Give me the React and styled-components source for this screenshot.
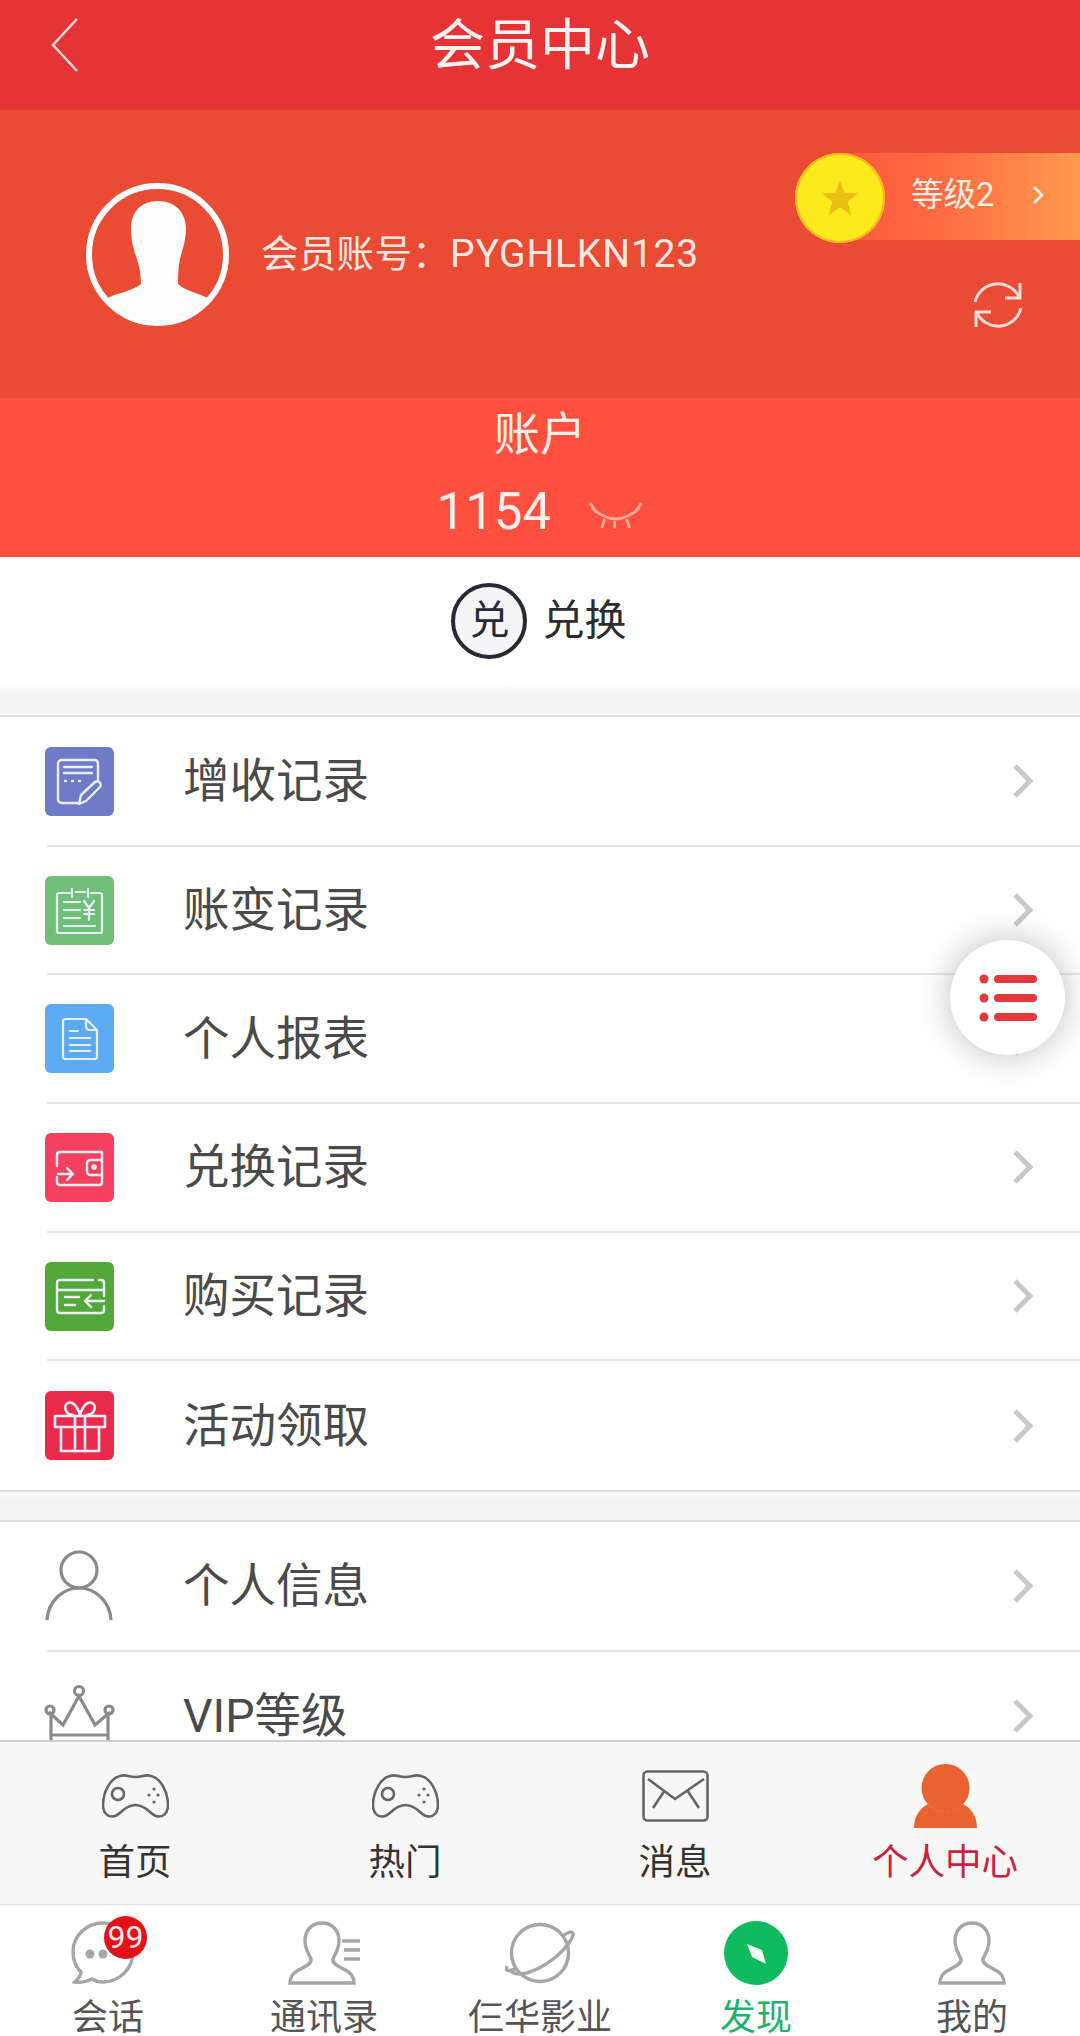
import React from "react";
import styled, { createGlobalStyle } from "styled-components";

const Global = createGlobalStyle`
  html, body { margin: 0; padding: 0; background: #fff; }
  * { box-sizing: border-box; }
  body { font-family: Roboto, "Noto Sans CJK SC", sans-serif; }
`;

const Page = styled.div`
  position: relative;
  width: 1080px;
  height: 2036px;
  overflow: hidden;
  display: flex;
  flex-direction: column;
  background: #fff;
`;

const Header = styled.header`
  flex: 0 0 110px;
  background: #e53336;
  display: grid;
  grid-template-columns: 1fr auto 1fr;
  align-items: start;
  padding-left: 50px;
`;
const BackIcon = styled.svg`
  width: 30px;
  height: 56px;
  margin-top: 17px;
  fill: none;
  stroke: #fbd9d6;
  stroke-width: 2.5;
`;
const Title = styled.h1`
  margin: 12px 0 0;
  font-size: 55px;
  line-height: 66px;
  font-weight: 400;
  color: #fdf3f0;
  transform: translateX(-25px);
`;

const Profile = styled.section`
  flex: 0 0 288px;
  background: #e94b33;
  display: flex;
  align-items: center;
  padding-left: 86px;
`;
const Avatar = styled.svg`
  flex: 0 0 143px;
  width: 143px;
  height: 143px;
`;
const Account = styled.div`
  margin-left: 32px;
  font-size: 37.5px;
  line-height: 44px;
  color: #fbe7e1;
  white-space: nowrap;
  letter-spacing: 0.3px;
`;
const AccountId = styled.span`
  font-size: 39px;
  letter-spacing: 0.8px;
`;
const ProfileSide = styled.div`
  margin-left: auto;
  align-self: flex-start;
  width: 285px;
  padding-top: 43px;
  display: flex;
  flex-direction: column;
`;
const RankBadge = styled.div`
  position: relative;
  height: 87px;
  margin-left: 45px;
  display: flex;
  align-items: center;
  background: linear-gradient(90deg, #fb5a3e 0%, #ff6a42 40%, #ff9a4d 100%);
  color: #fdeee2;
`;
const Coin = styled.div`
  position: absolute;
  left: -45px;
  top: 0;
  width: 90px;
  height: 90px;
  border-radius: 50%;
  background: #fdea1c;
  box-shadow: inset 0 0 0 2px #f5b81d;
  display: flex;
  align-items: center;
  justify-content: center;
`;
const RankText = styled.span`
  margin-left: 71px;
  font-size: 32.5px;
  line-height: 40px;
  margin-top: -3px;
`;
const RankChevron = styled.svg`
  width: 12px;
  height: 20px;
  margin-left: 38px;
  margin-top: -4px;
  fill: none;
  stroke: #fdf2e8;
  stroke-width: 2.6;
`;
const RefreshIcon = styled.svg`
  width: 52px;
  height: 52px;
  margin: 39px 0 0 177px;
  fill: none;
  stroke: #fbdcd6;
  stroke-width: 3;
`;

const Balance = styled.section`
  flex: 0 0 159px;
  background: #ff4f3f;
  display: flex;
  flex-direction: column;
  align-items: center;
  color: #fdeeea;
`;
const BalanceLabel = styled.div`
  font-size: 46px;
  line-height: 54px;
  margin-top: 9px;
`;
const BalanceRow = styled.div`
  display: flex;
  align-items: center;
  margin-top: 21px;
  width: 207px;
`;
const BalanceValue = styled.span`
  font-size: 51px;
  line-height: 60px;
`;
const EyeIcon = styled.svg`
  width: 56px;
  height: 28px;
  margin-left: 37px;
  margin-top: 8px;
  fill: none;
  stroke: #ffa99a;
  stroke-width: 2.8;
`;

const Exchange = styled.section`
  flex: 0 0 130px;
  background: #fff;
  display: flex;
  align-items: center;
  justify-content: center;
  gap: 15px;
  padding-right: 2px;
  padding-bottom: 2px;
`;
const ExchangeBadge = styled.div`
  width: 76px;
  height: 76px;
  border-radius: 50%;
  border: 4px solid #262a36;
  background: #f5f5f7;
  color: #262a36;
  font-size: 40px;
  line-height: 1;
  display: flex;
  align-items: center;
  justify-content: center;
`;
const ExchangeText = styled.span`
  font-size: 42px;
  line-height: 52px;
  color: #2c2c2c;
`;

const SectionGap = styled.div`
  flex: 0 0 ${(p) => p.$h}px;
  height: ${(p) => p.$h}px;
  background: linear-gradient(180deg, #fbfbfb 0%, #f3f3f3 40%, #f5f5f5 100%);
  border-top: ${(p) => (p.$ruled ? "2px solid #dedede" : "none")};
  border-bottom: 2px solid #dedede;
`;

const Scroller = styled.div`
  flex: 1 1 0;
  min-height: 0;
  overflow: hidden;
  background: #fff;
`;
const List = styled.div`
  background: #fff;
  padding: 1px 0 0 47px;
`;
const Row = styled.div`
  height: 128.7px;
  display: flex;
  align-items: center;
  border-bottom: 2px solid #e6e6e6;
  &:last-child { border-bottom: none; }
`;
const Tile = styled.div`
  flex: 0 0 69px;
  width: 69px;
  height: 69px;
  margin-left: -2px;
  border-radius: 6px;
  background: ${(p) => p.$bg};
  display: flex;
`;
const TileSvg = styled.svg`
  width: 69px;
  height: 69px;
  fill: none;
  stroke: #e9eef8;
  stroke-width: ${(p) => p.$sw || 2.4};
  stroke-linecap: round;
  stroke-linejoin: round;
`;
const LineIconBox = styled.svg`
  flex: 0 0 69px;
  width: 69px;
  height: ${(p) => p.$h || 69}px;
  margin-left: -2px;
  overflow: visible;
  fill: none;
  stroke: #8a8a8a;
  stroke-width: 3.2;
`;
const RowLabel = styled.span`
  margin-left: 69px;
  font-size: 46.5px;
  line-height: 46px;
  color: #4a4a4a;
  white-space: nowrap;
`;
const RowChevron = styled.svg`
  margin-left: auto;
  margin-right: 46px;
  width: 22px;
  height: 36px;
  fill: none;
  stroke: #c9c9c9;
  stroke-width: 5;
`;

const FloatButton = styled.div`
  position: absolute;
  left: 950px;
  top: 940px;
  width: 115px;
  height: 115px;
  border-radius: 50%;
  background: #fff;
  box-shadow: 0 0 34px rgba(0, 0, 0, 0.26);
  display: flex;
  align-items: center;
  justify-content: center;
`;
const FloatIcon = styled.svg`
  width: 58px;
  height: 48px;
  fill: #e03a3e;
`;

const Tabs = styled.nav`
  flex: 0 0 165px;
  background: #f7f7f7;
  border-top: 2px solid #cfcfcf;
  border-bottom: 1px solid #dddddd;
  display: grid;
  grid-template-columns: repeat(4, 1fr);
`;
const Tab = styled.div`
  display: flex;
  flex-direction: column;
  align-items: center;
  color: ${(p) => (p.$active ? "#c8243f" : "#333")};
`;
const TabIconBox = styled.div`
  height: 66px;
  margin-top: 21px;
  display: flex;
  align-items: center;
  justify-content: center;
`;
const TabIcon = styled.svg`
  width: ${(p) => p.$w}px;
  height: ${(p) => p.$h}px;
  fill: none;
  stroke: #666;
  stroke-width: 2.6;
`;
const TabLabel = styled.span`
  margin-top: 12px;
  font-size: 36.5px;
  line-height: 44px;
  white-space: nowrap;
`;

const BottomNav = styled.nav`
  flex: 0 0 131px;
  background: #fff;
  display: grid;
  grid-template-columns: repeat(5, 1fr);
  overflow: hidden;
`;
const NavItem = styled.div`
  display: flex;
  flex-direction: column;
  align-items: center;
  color: ${(p) => (p.$active ? "#23b26d" : "#555")};
`;
const NavIconBox = styled.div`
  position: relative;
  height: 64px;
  margin-top: 16px;
  margin-right: ${(p) => p.$pull || 0}px;
  display: flex;
  align-items: center;
  justify-content: center;
`;
const NavIcon = styled.svg`
  width: ${(p) => p.$w}px;
  height: 64px;
  fill: none;
  stroke: #a6a6a6;
  stroke-width: 3.4;
`;
const NavLabel = styled.span`
  margin-top: 15px;
  font-size: 36px;
  line-height: 36px;
  white-space: nowrap;
`;
const CountBadge = styled.span`
  position: absolute;
  left: 33px;
  top: -5px;
  width: 43px;
  height: 43px;
  border-radius: 50%;
  background: #e60f1a;
  color: #fbe9e9;
  font-size: 32px;
  line-height: 43px;
  text-align: center;
`;

const Chevron = () => (
  <RowChevron viewBox="0 0 22 36"><path d="M3 3 L18 18 L3 33" /></RowChevron>
);

const NoteIcon = () => (
  <TileSvg viewBox="0 0 69 69">
    <path d="M33 56 H17 Q13 56 13 52 V17 Q13 13 17 13 H49 Q53 13 53 17 V32" />
    <path d="M19 20 H47 M19 26 H47" />
    <path d="M20 34 H21 M27 34 H28 M34 34 H35" />
    <path d="M36 48 L50 35 Q53 33 55 36 Q57 38 54 41 L41 54 L34 57 Z" />
  </TileSvg>
);
const LedgerIcon = () => (
  <TileSvg viewBox="0 0 69 69" $sw={2.2}>
    <path d="M25 17 H14 Q12 17 12 19 V55 Q12 57 14 57 H55 Q57 57 57 55 V19 Q57 17 55 17 H46 M31 16 H40" />
    <path d="M27 13 V21 M43 13 V21" />
    <path d="M19 26 H35 M19 34 H35 M19 42 H35 M19 50 H50" />
    <path d="M39 25 L44 32 L49 25 M44 32 V44 M39 34 H49 M39 38 H49" />
  </TileSvg>
);
const DocIcon = () => (
  <TileSvg viewBox="0 0 69 69" $sw={2.2}>
    <path d="M21 15 H41 L52 26 V53 Q52 55 50 55 H20 Q18 55 18 53 V17 Q18 15 21 15 Z" />
    <path d="M41 15 V22 Q41 26 45 26 H52" />
    <path d="M25 27 H33 M25 34 H45 M25 41 H45 M25 47 H45" />
  </TileSvg>
);
const WalletIcon = () => (
  <TileSvg viewBox="0 0 69 69">
    <path d="M56 19 H15 Q12 19 12 22 V33 M12 44 V49 Q12 52 15 52 H54 Q57 52 57 49 V42" />
    <path d="M57 27 H46 Q42 27 42 31 V38 Q42 42 46 42 H57 V19" />
    <circle cx="49" cy="34" r="1.6" />
    <path d="M13 41 H28 M22 35 L28 41 L22 47" />
  </TileSvg>
);
const CardIcon = () => (
  <TileSvg viewBox="0 0 69 69">
    <path d="M48 18 H15 Q12 18 12 21 V48 Q12 51 15 51 H56 Q59 51 59 48 V44 M59 34 V21 Q59 18 56 18 H54" />
    <path d="M12 28 H59" />
    <path d="M20 35 H34 M20 43 H30" />
    <path d="M59 39 H40 M46 33 L40 39 L46 45" />
  </TileSvg>
);
const GiftIcon = () => (
  <TileSvg viewBox="0 0 69 69" $sw={2.6}>
    <path d="M10 25 H60 V36 H10 Z" />
    <path d="M16 36 V60 H54 V36" />
    <path d="M30 25 V60 M40 25 V60" />
    <path d="M35 24 C32 14 27 10 23 12 C18 14 20 24 28 24 M35 24 C38 14 43 10 47 12 C52 14 50 24 42 24" />
  </TileSvg>
);
const PersonLine = () => (
  <LineIconBox viewBox="0 0 69 69">
    <circle cx="34" cy="18" r="18" />
    <path d="M2 68 C3 50 17 36 34 36 C51 36 65 50 66 68" />
  </LineIconBox>
);
const Crown = () => (
  <LineIconBox viewBox="0 0 69 60" $h={60}>
    <circle cx="34" cy="5" r="4.5" />
    <circle cx="5" cy="24" r="4" />
    <circle cx="64" cy="24" r="4" />
    <path d="M34 10 L18 39 L6 28 V60 H63 V28 L50 39 Z" />
    <path d="M6 49 H63" />
  </LineIconBox>
);
const Gamepad = () => (
  <TabIcon viewBox="0 0 67 44" $w={67} $h={44}>
    <path d="M18 2 C24 0 26 3 33.5 3 C41 3 43 0 49 2 C58 4 66 17 66 31 C66 40 60 44 54 42 C48 40 44 31 33.5 31 C23 31 19 40 13 42 C7 44 1 40 1 31 C1 17 9 4 18 2 Z" />
    <circle cx="16" cy="20" r="6" />
    <g fill="#666" stroke="none">
      <circle cx="52" cy="15" r="1.6" /><circle cx="47" cy="21" r="1.6" /><circle cx="56" cy="21" r="1.6" /><circle cx="52" cy="28" r="1.6" />
    </g>
  </TabIcon>
);
const Envelope = () => (
  <TabIcon viewBox="0 0 67 52" $w={67} $h={52}>
    <rect x="1.5" y="1.5" width="64" height="49" rx="4" />
    <path d="M6 9 L33 29 L62 9 M11 38 L23 20 M57 38 L45 20" />
  </TabIcon>
);
const PersonFilled = () => (
  <TabIcon viewBox="0 0 63 64" $w={63} $h={64}>
    <g fill="#e8632f" stroke="none">
      <circle cx="31.5" cy="24" r="24" />
      <path d="M0 64 C0 52 6 44 14 40 C22 50 41 50 49 40 C57 44 63 52 63 64 Z" />
    </g>
  </TabIcon>
);
const Chat = () => (
  <NavIcon viewBox="0 0 64 64" $w={64}>
    <path d="M32 2 C15 2 2 15 2 31 C2 39 5 46 10 51 C10 55 7 58 4 61 C10 62 17 60 21 58 C24 60 28 61 32 61 C48 61 62 48 62 31 C62 15 48 2 32 2 Z" />
    <g fill="#a6a6a6" stroke="none"><circle cx="19" cy="33" r="4.5" /><circle cx="32" cy="33" r="4.5" /></g>
  </NavIcon>
);
const silhouette = "M34 2 C23 2 17 10 17 20 C17 28 21 33 23 38 C24 44 15 46 9 50 C4 53 2 57 2 62 L66 62 C66 57 64 53 59 50 C53 46 44 44 45 38 C47 33 51 28 51 20 C51 10 45 2 34 2 Z";
const Contact = () => (
  <NavIcon viewBox="0 0 72 64" $w={72}>
    <path d={silhouette} />
    <path d="M54 20 H72 M56 29 H72 M56 38 H72" />
  </NavIcon>
);
const Planet = () => (
  <NavIcon viewBox="0 0 70 64" $w={70}>
    <circle cx="35" cy="32" r="28.5" />
    <path d="M12 47 C3 51 -1 50 2 45 M58 15 C64 10 69 10 68 14 C66 22 52 38 34 47 C24 52 12 56 6 50" />
  </NavIcon>
);
const Compass = () => (
  <NavIcon viewBox="0 0 64 64" $w={64}>
    <circle cx="32" cy="32" r="32" fill="#10bb5e" stroke="none" />
    <path d="M23 23 L38 29 L42 43 L28 36 Z" fill="#f1fbf5" stroke="none" />
  </NavIcon>
);
const Me = () => (
  <NavIcon viewBox="0 0 68 64" $w={68}><path d={silhouette} /></NavIcon>
);

const records = [
  ["增收记录", "#6f7bc9", <NoteIcon />],
  ["账变记录", "#6fbf78", <LedgerIcon />],
  ["个人报表", "#5cabf2", <DocIcon />],
  ["兑换记录", "#f5405f", <WalletIcon />],
  ["购买记录", "#52a838", <CardIcon />],
  ["活动领取", "#ea2a4a", <GiftIcon />],
];

export default function App() {
  return (
    <Page>
      <Global />
      <Header>
        <BackIcon viewBox="0 0 30 56"><path d="M27 2 L3 28 L27 54" /></BackIcon>
        <Title>会员中心</Title>
      </Header>

      <Profile>
        <Avatar viewBox="0 0 143 143">
          <defs><clipPath id="av"><circle cx="71.5" cy="71.5" r="69" /></clipPath></defs>
          <circle cx="71.5" cy="71.5" r="68.5" fill="none" stroke="#fff" strokeWidth="6" />
          <path clipPath="url(#av)" fill="#fbfbfb" d="M72 18 C90 18 100 30 100 46 C100 58 96 68 94 76 C92 86 92 94 92 101 C100 108 112 110 124 116 L124 143 L19 143 L19 116 C31 110 46 108 55 101 C55 94 54 86 51 76 C48 68 45 58 45 46 C45 30 54 18 72 18 Z" />
        </Avatar>
        <Account>会员账号：<AccountId>PYGHLKN123</AccountId></Account>
        <ProfileSide>
          <RankBadge>
            <Coin>
              <svg width="36" height="34" viewBox="0 0 38 36"><path fill="#e8bf12" d="M19 0 L24 13 L38 13 L27 22 L31 36 L19 28 L7 36 L11 22 L0 13 L14 13 Z" /></svg>
            </Coin>
            <RankText>等级2</RankText>
            <RankChevron viewBox="0 0 12 20"><path d="M2 2 L10 10 L2 18" /></RankChevron>
          </RankBadge>
          <RefreshIcon viewBox="0 0 52 52">
            <path d="M3 23 A23.5 23.5 0 0 1 47 18" />
            <path d="M48 4 V19 H33" />
            <path d="M49 29 A23.5 23.5 0 0 1 5 34" />
            <path d="M4 48 V33 H19" />
          </RefreshIcon>
        </ProfileSide>
      </Profile>

      <Balance>
        <BalanceLabel>账户</BalanceLabel>
        <BalanceRow>
          <BalanceValue>1154</BalanceValue>
          <EyeIcon viewBox="0 0 56 28">
            <path d="M4 6 Q28 28 52 6" />
            <path d="M2 1 L9 11 M54 1 L47 11 M17 17 L14 26 M39 17 L42 26 M27 19 V27" />
          </EyeIcon>
        </BalanceRow>
      </Balance>

      <Exchange>
        <ExchangeBadge>兑</ExchangeBadge>
        <ExchangeText>兑换</ExchangeText>
      </Exchange>
      <SectionGap $h={30} />

      <Scroller>
        <List>
          {records.map(([label, bg, icon]) => (
            <Row key={label}>
              <Tile $bg={bg}>{icon}</Tile>
              <RowLabel>{label}</RowLabel>
              <Chevron />
            </Row>
          ))}
        </List>
        <SectionGap $h={32} $ruled />
        <List>
          <Row>
            <PersonLine />
            <RowLabel>个人信息</RowLabel>
            <Chevron />
          </Row>
          <Row>
            <Crown />
            <RowLabel>VIP等级</RowLabel>
            <Chevron />
          </Row>
        </List>
      </Scroller>

      <Tabs>
        <Tab><TabIconBox><Gamepad /></TabIconBox><TabLabel>首页</TabLabel></Tab>
        <Tab><TabIconBox><Gamepad /></TabIconBox><TabLabel>热门</TabLabel></Tab>
        <Tab><TabIconBox><Envelope /></TabIconBox><TabLabel>消息</TabLabel></Tab>
        <Tab $active><TabIconBox><PersonFilled /></TabIconBox><TabLabel>个人中心</TabLabel></Tab>
      </Tabs>

      <BottomNav>
        <NavItem>
          <NavIconBox $pull={10}><Chat /><CountBadge>99</CountBadge></NavIconBox>
          <NavLabel>会话</NavLabel>
        </NavItem>
        <NavItem><NavIconBox><Contact /></NavIconBox><NavLabel>通讯录</NavLabel></NavItem>
        <NavItem><NavIconBox><Planet /></NavIconBox><NavLabel>仨华影业</NavLabel></NavItem>
        <NavItem $active><NavIconBox><Compass /></NavIconBox><NavLabel>发现</NavLabel></NavItem>
        <NavItem><NavIconBox><Me /></NavIconBox><NavLabel>我的</NavLabel></NavItem>
      </BottomNav>

      <FloatButton>
        <FloatIcon viewBox="0 0 58 48">
          <circle cx="5" cy="5" r="4.5" /><circle cx="5" cy="24" r="4.5" /><circle cx="5" cy="43" r="4.5" />
          <rect x="15" y="1" width="43" height="8" rx="4" />
          <rect x="15" y="20" width="43" height="8" rx="4" />
          <rect x="15" y="39" width="43" height="8" rx="4" />
        </FloatIcon>
      </FloatButton>
    </Page>
  );
}
